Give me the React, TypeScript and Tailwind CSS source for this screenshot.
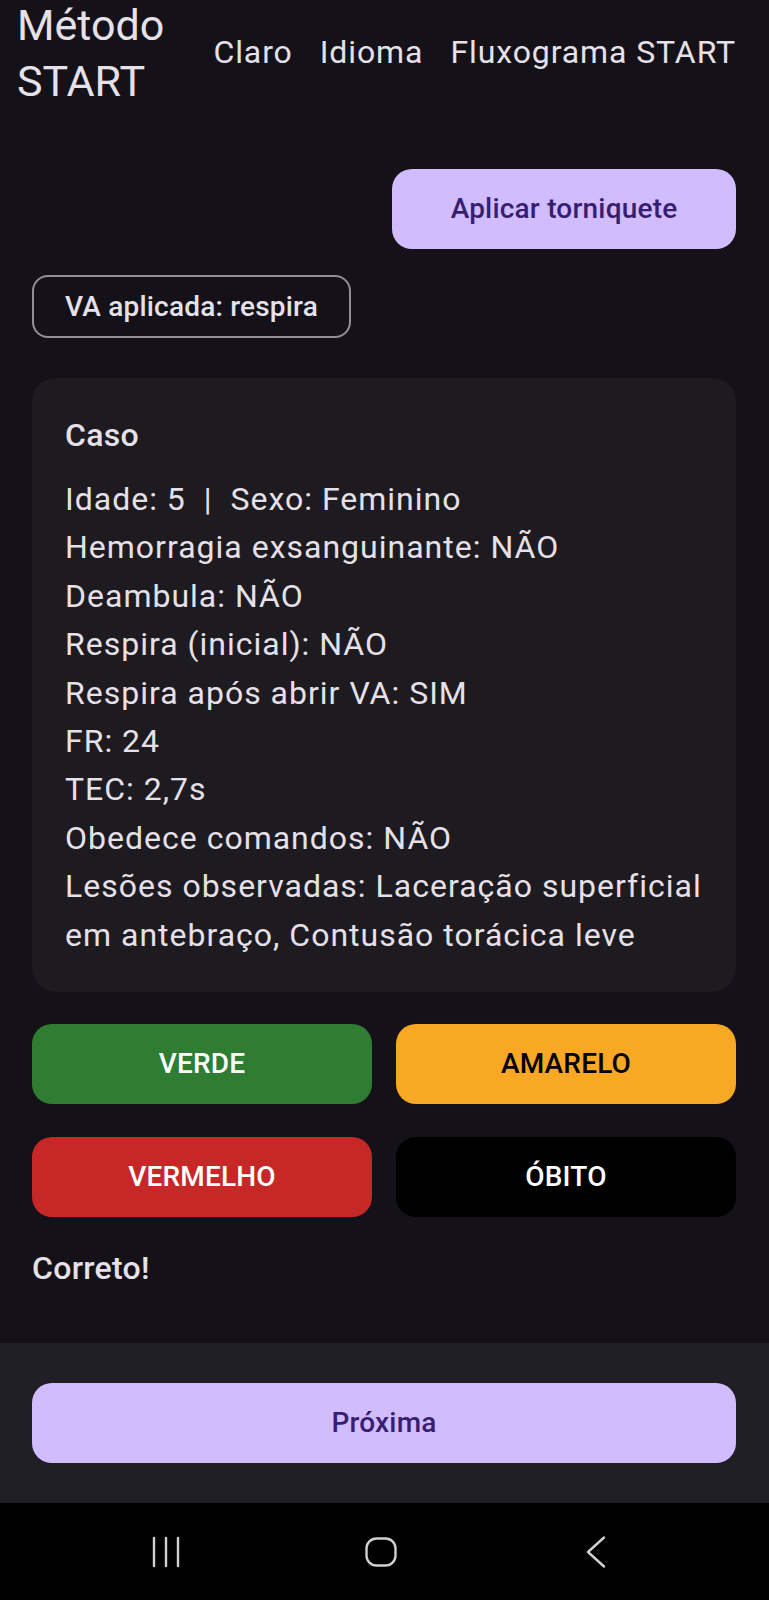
function NavBar() {
  return (
    <nav className="h-[97px] bg-black flex items-center justify-center pr-[8px]">
      <div className="w-[215px] flex justify-center">
        <svg width="30" height="32" viewBox="0 0 30 32" fill="none" stroke="#cfcfcf" strokeWidth="2.4" strokeLinecap="round">
          <line x1="3" y1="2" x2="3" y2="30" />
          <line x1="15" y1="2" x2="15" y2="30" />
          <line x1="27" y1="2" x2="27" y2="30" />
        </svg>
      </div>
      <div className="w-[215px] flex justify-center">
        <svg width="32" height="30" viewBox="0 0 32 30" fill="none" stroke="#cfcfcf" strokeWidth="2.4">
          <rect x="1.5" y="1.5" width="29" height="27" rx="10" />
        </svg>
      </div>
      <div className="w-[215px] flex justify-center">
        <svg width="20" height="32" viewBox="0 0 20 32" fill="none" stroke="#cfcfcf" strokeWidth="2.4" strokeLinecap="round" strokeLinejoin="round">
          <polyline points="18,1.5 2,16 18,30.5" />
        </svg>
      </div>
    </nav>
  )
}

export default function App() {
  const lines = [
    "Hemorragia exsanguinante: NÃO",
    "Deambula: NÃO",
    "Respira (inicial): NÃO",
    "Respira após abrir VA: SIM",
    "FR: 24",
    "TEC: 2,7s",
    "Obedece comandos: NÃO",
  ]

  return (
    <div className="h-[1600px] flex flex-col bg-[#141218] text-[#e6e0e9] font-['Roboto',sans-serif] overflow-hidden">
      <header className="flex items-center pl-[17px] pr-[33px] mt-[-3px]">
        <h1 className="w-[160px] text-[43px] leading-[56px] font-normal">Método START</h1>
        <ul className="ml-auto -mt-[3px] flex items-center gap-[27px] text-[32px] leading-[48px] tracking-[0.9px]">
          <li>Claro</li>
          <li>Idioma</li>
          <li>Fluxograma START</li>
        </ul>
      </header>

      <main className="flex-1 flex flex-col pl-[32px] pr-[33px]">
        <button className="self-end mt-[60px] w-[344px] h-[80px] rounded-[20px] bg-[#d0bcff] text-[#381e72] text-[28px] font-medium tracking-[0.2px]">
          Aplicar torniquete
        </button>

        <button className="self-start mt-[26px] h-[63px] px-[31px] rounded-[16px] border-2 border-[#938f99] text-[28px] font-medium tracking-[0.2px] text-[#e6e0e9]">
          VA aplicada: respira
        </button>

        <section className="mt-[40px] rounded-[24px] bg-[#1d1b20] p-[33px]">
          <h2 className="text-[32px] leading-[48px] font-medium tracking-[0.3px]">Caso</h2>
          <div className="mt-[16px] text-[32px] leading-[48.4px] tracking-[1px]">
            <p className="whitespace-pre">Idade: 5  |  Sexo: Feminino</p>
            {lines.map((l) => (
              <p key={l}>{l}</p>
            ))}
            <p>Lesões observadas: Laceração superficial em antebraço, Contusão torácica leve</p>
          </div>
        </section>

        <div className="mt-[32px] grid grid-cols-2 gap-x-[24px] gap-y-[33px] text-[28px] font-medium tracking-[0.2px]">
          <button className="h-[80px] rounded-[20px] bg-[#2e7d32] text-white">VERDE</button>
          <button className="h-[80px] rounded-[20px] bg-[#f9a825] text-black">AMARELO</button>
          <button className="h-[80px] rounded-[20px] bg-[#c62828] text-white">VERMELHO</button>
          <button className="h-[80px] rounded-[20px] bg-black text-white">ÓBITO</button>
        </div>

        <p className="mt-[27px] text-[32px] leading-[48px] font-medium tracking-[0.3px]">Correto!</p>
      </main>

      <footer className="bg-[#211f26] py-[40px] pl-[32px] pr-[33px]">
        <button className="w-full h-[80px] rounded-[20px] bg-[#d0bcff] text-[#381e72] text-[28px] font-medium tracking-[0.2px]">
          Próxima
        </button>
      </footer>

      <NavBar />
    </div>
  )
}
